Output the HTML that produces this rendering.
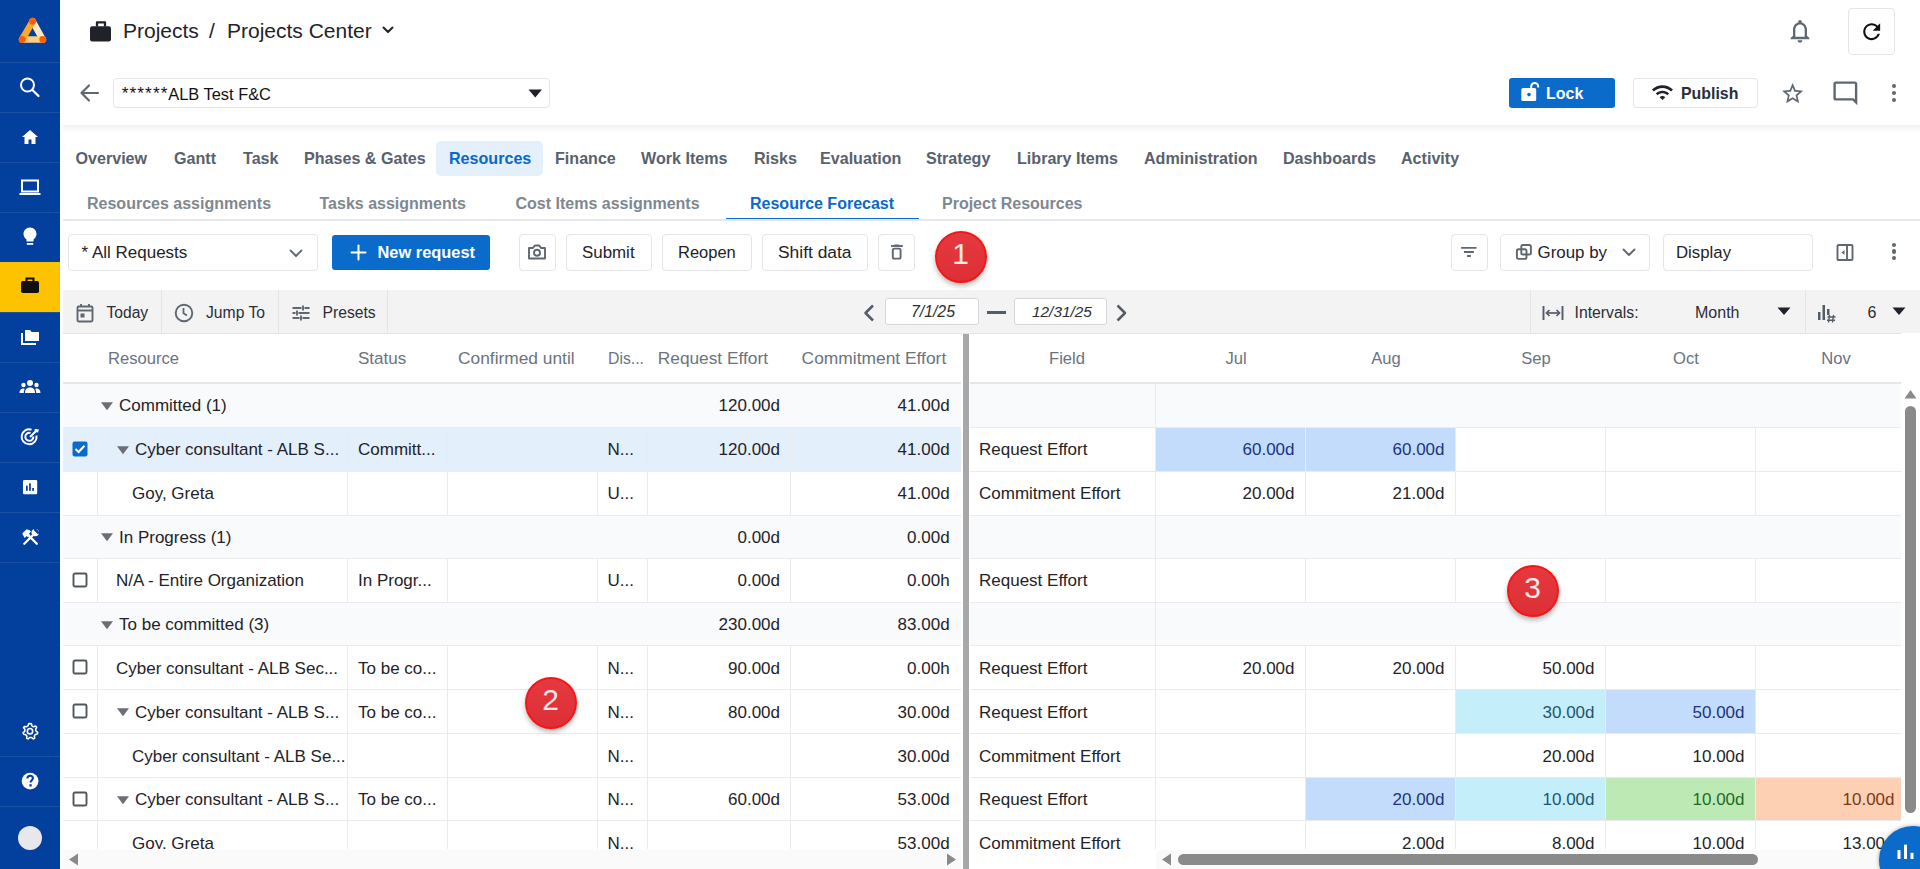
<!DOCTYPE html>
<html><head><meta charset="utf-8"><title>Resource Forecast</title>
<style>
html,body{margin:0;padding:0;}
body{width:1920px;height:869px;overflow:hidden;position:relative;background:#fff;font-family:"Liberation Sans",sans-serif;}
.a{position:absolute;box-sizing:border-box;}
.t{position:absolute;white-space:nowrap;}
svg.a{overflow:visible;}
</style></head><body>

<div class="a" style="left:0px;top:0px;width:60px;height:869px;background:#033f9c;"></div>
<div class="a" style="left:0px;top:62px;width:60px;height:1px;background:rgba(255,255,255,0.10);"></div>
<div class="a" style="left:0px;top:112px;width:60px;height:1px;background:rgba(255,255,255,0.10);"></div>
<div class="a" style="left:0px;top:162px;width:60px;height:1px;background:rgba(255,255,255,0.10);"></div>
<div class="a" style="left:0px;top:212px;width:60px;height:1px;background:rgba(255,255,255,0.10);"></div>
<div class="a" style="left:0px;top:262px;width:60px;height:1px;background:rgba(255,255,255,0.10);"></div>
<div class="a" style="left:0px;top:312px;width:60px;height:1px;background:rgba(255,255,255,0.10);"></div>
<div class="a" style="left:0px;top:362px;width:60px;height:1px;background:rgba(255,255,255,0.10);"></div>
<div class="a" style="left:0px;top:412px;width:60px;height:1px;background:rgba(255,255,255,0.10);"></div>
<div class="a" style="left:0px;top:462px;width:60px;height:1px;background:rgba(255,255,255,0.10);"></div>
<div class="a" style="left:0px;top:512px;width:60px;height:1px;background:rgba(255,255,255,0.10);"></div>
<div class="a" style="left:0px;top:562px;width:60px;height:1px;background:rgba(255,255,255,0.10);"></div>
<div class="a" style="left:0px;top:756px;width:60px;height:1px;background:rgba(255,255,255,0.10);"></div>
<div class="a" style="left:0px;top:806px;width:60px;height:1px;background:rgba(255,255,255,0.10);"></div>
<div class="a" style="left:0px;top:262px;width:60px;height:50px;background:#fdc300;"></div>
<svg class="a" style="left:17px;top:17px;" width="30" height="28" viewBox="0 0 30 28"><path d="M25.8 22.5 L15.6 4.3" stroke="#ffe8bd" stroke-width="6.6" stroke-linecap="round"/>
<path d="M5.2 22.5 L25.8 22.5" stroke="#fdd07f" stroke-width="6.6" stroke-linecap="round"/>
<path d="M15.6 4.3 L5.2 22.5" stroke="#ffa630" stroke-width="6.6" stroke-linecap="round"/>
<circle cx="15.6" cy="4.3" r="3.4" fill="#ff5d00"/><circle cx="5.2" cy="22.5" r="3.4" fill="#ff5d00"/><circle cx="25.8" cy="22.5" r="3.4" fill="#ff5d00"/></svg>
<svg class="a" style="left:18px;top:76px;" width="24" height="24" viewBox="0 0 24 24"><circle cx="9.5" cy="9" r="6.5" fill="none" stroke="#fff" stroke-width="2"/><path d="M14.5 14 L20.5 20" stroke="#fff" stroke-width="2.2" stroke-linecap="round"/></svg>
<svg class="a" style="left:20px;top:128px;" width="20" height="18" viewBox="0 0 20 18"><path d="M10 2 L2 9 H4.5 V16 H8.5 V11.5 H11.5 V16 H15.5 V9 H18 Z" fill="#fff"/></svg>
<svg class="a" style="left:19px;top:178px;" width="22" height="18" viewBox="0 0 22 18"><rect x="3" y="2.5" width="16" height="11" fill="none" stroke="#fff" stroke-width="2"/><rect x="0.5" y="15" width="21" height="2" fill="#fff"/></svg>
<svg class="a" style="left:22px;top:226px;" width="16" height="22" viewBox="0 0 16 22"><path d="M8 1.5 C4 1.5 1.5 4.5 1.5 8 C1.5 10.5 3 12.2 4.5 13.5 V15.5 H11.5 V13.5 C13 12.2 14.5 10.5 14.5 8 C14.5 4.5 12 1.5 8 1.5 Z" fill="#fff"/><rect x="4.8" y="17" width="6.4" height="1.8" fill="#fff"/></svg>
<svg class="a" style="left:20px;top:276px;" width="20" height="18" viewBox="0 0 20 18"><rect x="1" y="5" width="18" height="12" rx="1.8" fill="#111"/><path d="M6.5 5 V2.5 H13.5 V5" fill="none" stroke="#111" stroke-width="2"/></svg>
<svg class="a" style="left:20px;top:328px;" width="20" height="18" viewBox="0 0 20 18"><path d="M5 2 H10 L11.5 4 H19 V13 H5 Z" fill="#fff"/><path d="M2 5 V16 H16" fill="none" stroke="#fff" stroke-width="2"/></svg>
<svg class="a" style="left:19px;top:379px;" width="22" height="16" viewBox="0 0 22 16"><circle cx="11" cy="4" r="3" fill="#fff"/><circle cx="4.5" cy="6" r="2.2" fill="#fff"/><circle cx="17.5" cy="6" r="2.2" fill="#fff"/><path d="M6 14 C6 10 8 8.5 11 8.5 C14 8.5 16 10 16 14 Z" fill="#fff"/><path d="M0.5 14 C0.5 11 2 9.5 4.5 9.5 C5.5 9.5 5.8 10 5.5 10.5 C5 11.5 4.8 12.5 4.8 14 Z" fill="#fff"/><path d="M21.5 14 C21.5 11 20 9.5 17.5 9.5 C16.5 9.5 16.2 10 16.5 10.5 C17 11.5 17.2 12.5 17.2 14 Z" fill="#fff"/></svg>
<svg class="a" style="left:20px;top:427px;" width="20" height="20" viewBox="0 0 20 20"><path d="M16.5 8.5 A7.5 7.5 0 1 1 11.5 2.7" fill="none" stroke="#fff" stroke-width="2"/><path d="M13.3 9.5 A4 4 0 1 1 10.5 6" fill="none" stroke="#fff" stroke-width="2"/><path d="M10 10 L17 3" stroke="#fff" stroke-width="2"/><path d="M14.5 2 L15 5 L18 5.5 L19 2.5 Z" fill="#fff"/></svg>
<svg class="a" style="left:23px;top:480px;" width="14" height="14" viewBox="0 0 14 14"><rect x="0" y="0" width="14.2" height="14.2" rx="1.3" fill="#fff"/><rect x="3" y="5.7" width="1.7" height="5.2" fill="#033f9c"/><rect x="6.1" y="3.2" width="1.7" height="7.7" fill="#033f9c"/><rect x="9.2" y="8" width="1.7" height="2.9" fill="#033f9c"/></svg>
<svg class="a" style="left:20px;top:527px;" width="22" height="22" viewBox="0 0 22 22"><path d="M4.3 16.7 L14 7" stroke="#fff" stroke-width="2.3" stroke-linecap="round"/><path d="M16.8 16.7 L7.5 7.4" stroke="#fff" stroke-width="2.3" stroke-linecap="round"/><path d="M2.2 6.6 L6.6 2.2 L9.6 3.2 L11 4.6 L8.9 6.7 L9.9 7.7 L7.7 9.9 L6.7 8.9 L4.6 11 Z" fill="#fff"/><circle cx="15.2" cy="5.6" r="3.7" fill="#fff"/><path d="M15.4 1 L19.8 5.4 L17.9 7.3 L13.5 2.9 Z" fill="#033f9c"/></svg>
<svg class="a" style="left:20px;top:721px;" width="20" height="20" viewBox="0 0 20 20"><g transform="translate(10 10.2) scale(0.9) translate(-10 -10)"><circle cx="10" cy="10" r="3" fill="none" stroke="#fff" stroke-width="1.8"/><path d="M10 1.5 L11.6 1.7 L12.1 4 L14 5.1 L16.2 4.3 L17.4 5.7 L16.3 7.8 L16.7 9.9 L18.6 11.2 L18.2 13 L15.9 13.6 L14.8 15.5 L15.2 17.8 L13.6 18.6 L11.8 17 L9.6 17 L7.8 18.6 L6.3 17.8 L6.6 15.5 L5.1 13.8 L2.8 13.3 L2.3 11.5 L4.2 10.1 L4.3 7.9 L2.8 6.2 L3.8 4.7 L6.2 5 L8 3.8 L8.4 1.7 Z" fill="none" stroke="#fff" stroke-width="1.7" stroke-linejoin="round"/></g></svg>
<svg class="a" style="left:20px;top:771px;" width="20" height="20" viewBox="0 0 20 20"><circle cx="10.1" cy="10.1" r="8.4" fill="#fff"/><path d="M7.3 7.6 C7.3 5.8 8.5 4.8 10.1 4.8 C11.8 4.8 12.9 5.9 12.9 7.3 C12.9 9.2 10.6 9.4 10.6 11.6" fill="none" stroke="#033f9c" stroke-width="2.1"/><rect x="9.4" y="13.2" width="2.3" height="2.3" fill="#033f9c"/></svg>
<div class="a" style="left:18px;top:826px;width:24px;height:24px;background:#e6e8ec;border-radius:50%;"></div>
<svg class="a" style="left:89px;top:20px;" width="23" height="23" viewBox="0 0 23 23"><rect x="1" y="6.2" width="21" height="15.3" rx="2.2" fill="#1f2329"/><path d="M8 6.5 V2.4 H16 V6.5" fill="none" stroke="#1f2329" stroke-width="2.3" stroke-linejoin="round"/></svg>
<div class="t" style="left:123px;top:20.22px;font-size:21px;line-height:21px;color:#1f2329;">Projects</div>
<div class="t" style="left:209px;top:20.22px;font-size:21px;line-height:21px;color:#1f2329;">/</div>
<div class="t" style="left:227px;top:20.22px;font-size:21px;line-height:21px;color:#1f2329;">Projects Center</div>
<svg class="a" style="left:382px;top:26px;" width="12" height="8" viewBox="0 0 12 8"><path d="M1.5 1.5 L6 6 L10.5 1.5" fill="none" stroke="#1f2329" stroke-width="2" stroke-linecap="round" stroke-linejoin="round"/></svg>
<svg class="a" style="left:79px;top:83px;" width="22" height="20" viewBox="0 0 22 20"><path d="M19 10 H3 M10 2.5 L2.5 10 L10 17.5" fill="none" stroke="#5f6771" stroke-width="2.2" stroke-linecap="round" stroke-linejoin="round"/></svg>
<div class="a" style="left:113px;top:78px;width:437px;height:30px;border:1px solid #e3e5e8;border-radius:4px;background:#fff;"></div>
<div class="t" style="left:121.8px;top:84.86px;font-size:17.3px;line-height:17.3px;color:#111;letter-spacing:1.05px;">******</div>
<div class="t" style="left:168.3px;top:85.62px;font-size:16.4px;line-height:16.4px;color:#111;">ALB Test F&amp;C</div>
<svg class="a" style="left:528px;top:89px;" width="15" height="10" viewBox="0 0 15 10"><path d="M0.5 0.5 H14 L7.25 8.5 Z" fill="#1f2329"/></svg>
<div class="a" style="left:1509px;top:78px;width:106px;height:30px;background:#0b6bcb;border-radius:3px;"></div>
<svg class="a" style="left:1520px;top:81px;" width="22" height="22" viewBox="0 0 22 22"><rect x="1.3" y="7.1" width="14.9" height="12.9" rx="1.6" fill="#fff"/><path d="M11.2 7.6 V5.4 A3.5 3.5 0 0 1 18.2 5.4 V6.6" fill="none" stroke="#fff" stroke-width="2"/><circle cx="9" cy="13.6" r="1.8" fill="#0b6bcb"/></svg>
<div class="t" style="left:1546px;top:85.96px;font-size:16px;line-height:16px;color:#fff;font-weight:bold;">Lock</div>
<div class="a" style="left:1633px;top:78px;width:125px;height:30px;border:1px solid #e3e5e8;border-radius:3px;background:#fff;"></div>
<svg class="a" style="left:1651px;top:80.6px" width="22.9" height="22.9" viewBox="0 0 24 24"><path d="M1 9l2 2c4.97-4.97 13.03-4.97 18 0l2-2C16.930 2.930 7.080 2.930 1 9zm8 8l3 3 3-3c-1.65-1.66-4.34-1.66-6 0zm-4-4l2 2c2.76-2.76 7.24-2.76 10 0l2-2C15.14 9.14 8.87 9.14 5 13z" fill="#1f2329"/></svg>
<div class="t" style="left:1681px;top:86.04px;font-size:15.9px;line-height:15.9px;color:#2a2f36;font-weight:bold;">Publish</div>
<svg class="a" style="left:1779.9px;top:80.6px" width="25.3" height="25.3" viewBox="0 0 24 24"><path d="M22 9.24l-7.19-.62L12 2 9.19 8.63 2 9.24l5.46 4.73L5.82 21 12 17.27 18.18 21l-1.63-7.03L22 9.24zM12 15.4l-3.76 2.27 1-4.28-3.32-2.88 4.38-.38L12 6.1l1.71 4.04 4.38.38-3.32 2.88 1 4.28L12 15.4z" fill="#5f6771"/></svg>
<svg class="a" style="left:1831px;top:78.9px" width="28.7" height="28.7" viewBox="0 0 24 24"><path d="M22 4c0-1.1-.9-2-2-2H4c-1.1 0-2 .9-2 2v12c0 1.1.9 2 2 2h14l4 4V4zm-2 13.17L18.830 16H4V4h16v13.17z" fill="#5f6771"/></svg>
<div class="a" style="left:1891.5px;top:83.7px;width:4.599999999999909px;height:4.599999999999994px;background:#5f6771;border-radius:50%;"></div>
<div class="a" style="left:1891.5px;top:90.7px;width:4.599999999999909px;height:4.599999999999994px;background:#5f6771;border-radius:50%;"></div>
<div class="a" style="left:1891.5px;top:97.7px;width:4.599999999999909px;height:4.599999999999994px;background:#5f6771;border-radius:50%;"></div>
<svg class="a" style="left:1786.1px;top:17.3px" width="28" height="28" viewBox="0 0 24 24"><path d="M12 22c1.1 0 2-.9 2-2h-4c0 1.1.89 2 2 2zm6-6v-5c0-3.07-1.64-5.64-4.5-6.32V4c0-.83-.67-1.5-1.5-1.5s-1.5.67-1.5 1.5v.68C7.630 5.36 6 7.920 6 11v5l-2 2v1h16v-1l-2-2zm-2 1H8v-6c0-2.48 1.51-4.5 4-4.5s4 2.020 4 4.5v6z" fill="#5f6771"/></svg>
<div class="a" style="left:1848px;top:8px;width:47px;height:47px;border:1px solid #e3e5e8;border-radius:4px;background:#fff;"></div>
<svg class="a" style="left:1858.6px;top:18.8px" width="25.4" height="25.4" viewBox="0 0 24 24"><path d="M17.65 6.35C16.2 4.9 14.21 4 12 4c-4.42 0-7.99 3.58-7.99 8s3.57 8 7.99 8c3.73 0 6.84-2.55 7.73-6h-2.08c-.82 2.33-3.040 4-5.65 4-3.31 0-6-2.69-6-6s2.69-6 6-6c1.66 0 3.14.69 4.22 1.78L13 11h7V4l-2.35 2.35z" fill="#111"/></svg>
<div class="a" style="left:63px;top:125px;width:1857px;height:8px;background:linear-gradient(#f1f2f4,#ffffff);"></div>
<div class="a" style="left:436px;top:141px;width:107px;height:35px;background:#e4f0fc;border-radius:5px;"></div>
<div class="t" style="left:75.5px;top:149.87px;font-size:16.1px;line-height:16.1px;color:#58616d;font-weight:bold;">Overview</div>
<div class="t" style="left:174px;top:149.87px;font-size:16.1px;line-height:16.1px;color:#58616d;font-weight:bold;">Gantt</div>
<div class="t" style="left:243px;top:149.87px;font-size:16.1px;line-height:16.1px;color:#58616d;font-weight:bold;">Task</div>
<div class="t" style="left:304px;top:149.87px;font-size:16.1px;line-height:16.1px;color:#58616d;font-weight:bold;">Phases &amp; Gates</div>
<div class="t" style="left:449px;top:149.87px;font-size:16.1px;line-height:16.1px;color:#0a68c8;font-weight:bold;">Resources</div>
<div class="t" style="left:555px;top:149.87px;font-size:16.1px;line-height:16.1px;color:#58616d;font-weight:bold;">Finance</div>
<div class="t" style="left:641px;top:149.87px;font-size:16.1px;line-height:16.1px;color:#58616d;font-weight:bold;">Work Items</div>
<div class="t" style="left:754px;top:149.87px;font-size:16.1px;line-height:16.1px;color:#58616d;font-weight:bold;">Risks</div>
<div class="t" style="left:820px;top:149.87px;font-size:16.1px;line-height:16.1px;color:#58616d;font-weight:bold;">Evaluation</div>
<div class="t" style="left:926px;top:149.87px;font-size:16.1px;line-height:16.1px;color:#58616d;font-weight:bold;">Strategy</div>
<div class="t" style="left:1017px;top:149.87px;font-size:16.1px;line-height:16.1px;color:#58616d;font-weight:bold;">Library Items</div>
<div class="t" style="left:1144px;top:149.87px;font-size:16.1px;line-height:16.1px;color:#58616d;font-weight:bold;">Administration</div>
<div class="t" style="left:1283px;top:149.87px;font-size:16.1px;line-height:16.1px;color:#58616d;font-weight:bold;">Dashboards</div>
<div class="t" style="left:1401px;top:149.87px;font-size:16.1px;line-height:16.1px;color:#58616d;font-weight:bold;">Activity</div>
<div class="t" style="left:87px;top:195.96px;font-size:16px;line-height:16px;color:#7f8791;font-weight:bold;">Resources assignments</div>
<div class="t" style="left:319.5px;top:195.96px;font-size:16px;line-height:16px;color:#7f8791;font-weight:bold;">Tasks assignments</div>
<div class="t" style="left:515.5px;top:195.96px;font-size:16px;line-height:16px;color:#7f8791;font-weight:bold;">Cost Items assignments</div>
<div class="t" style="left:750px;top:195.96px;font-size:16px;line-height:16px;color:#0a68c8;font-weight:bold;">Resource Forecast</div>
<div class="t" style="left:942px;top:195.96px;font-size:16px;line-height:16px;color:#7f8791;font-weight:bold;">Project Resources</div>
<div class="a" style="left:726px;top:217.5px;width:192.5px;height:3.0px;background:#0b6bcb;"></div>
<div class="a" style="left:63px;top:219px;width:1857px;height:2px;background:#e6e8ec;"></div>
<div class="a" style="left:68px;top:234px;width:250px;height:37px;border:1px solid #e3e5e8;border-radius:4px;background:#fff;"></div>
<div class="t" style="left:81.5px;top:243.91px;font-size:17px;line-height:17px;color:#1f2329;">* All Requests</div>
<svg class="a" style="left:289px;top:249px;" width="14" height="9" viewBox="0 0 14 9"><path d="M1.5 1.5 L7 7 L12.5 1.5" fill="none" stroke="#5f6771" stroke-width="1.8" stroke-linecap="round" stroke-linejoin="round"/></svg>
<div class="a" style="left:332px;top:235px;width:158px;height:35px;background:#0b6bcb;border-radius:3px;"></div>
<svg class="a" style="left:350px;top:244px;" width="17" height="17" viewBox="0 0 17 17"><path d="M8.5 1.5 V15.5 M1.5 8.5 H15.5" stroke="#fff" stroke-width="2" stroke-linecap="round"/></svg>
<div class="t" style="left:377.5px;top:244.42px;font-size:16.4px;line-height:16.4px;color:#fff;font-weight:bold;font-weight:600;">New request</div>
<div class="a" style="left:519px;top:234px;width:37px;height:37px;border:1px solid #e3e5e8;border-radius:4px;background:#fff;"></div>
<svg class="a" style="left:527px;top:242px;" width="20" height="20" viewBox="0 0 20 20"><path d="M2 6 H6 L7.8 3.5 H12.2 L14 6 H18 V16.5 H2 Z" fill="none" stroke="#5f6771" stroke-width="1.9" stroke-linejoin="round"/><circle cx="10" cy="10.8" r="3" fill="none" stroke="#5f6771" stroke-width="1.9"/></svg>
<div class="a" style="left:566px;top:234px;width:86px;height:37px;border:1px solid #e3e5e8;border-radius:4px;background:#fff;"></div>
<div class="t" style="left:582px;top:244.79px;font-size:16.9px;line-height:16.9px;color:#1f2329;">Submit</div>
<div class="a" style="left:662px;top:234px;width:90px;height:37px;border:1px solid #e3e5e8;border-radius:4px;background:#fff;"></div>
<div class="t" style="left:678px;top:244.33px;font-size:16.5px;line-height:16.5px;color:#1f2329;">Reopen</div>
<div class="a" style="left:762px;top:234px;width:106px;height:37px;border:1px solid #e3e5e8;border-radius:4px;background:#fff;"></div>
<div class="t" style="left:778px;top:243.57px;font-size:17.4px;line-height:17.4px;color:#1f2329;">Shift data</div>
<div class="a" style="left:878px;top:234px;width:37px;height:37px;border:1px solid #e3e5e8;border-radius:4px;background:#fff;"></div>
<svg class="a" style="left:887px;top:242px;" width="20" height="20" viewBox="0 0 20 20"><rect x="5.8" y="6.6" width="7.8" height="10" rx="1.6" fill="none" stroke="#5f6771" stroke-width="1.9"/><path d="M4 4 H15.9" stroke="#5f6771" stroke-width="1.9"/><path d="M7.8 3.2 H11.8" stroke="#5f6771" stroke-width="1.6" stroke-linecap="round"/></svg>
<div class="a" style="left:1451px;top:234px;width:37px;height:37px;border:1px solid #e3e5e8;border-radius:4px;background:#fff;"></div>
<svg class="a" style="left:1459px;top:242px;" width="20" height="20" viewBox="0 0 20 20"><path d="M2.1 5.9 H17.5 M5 10 H14.9 M8.1 14 H11.8" stroke="#5f6771" stroke-width="1.9" stroke-linecap="butt"/></svg>
<div class="a" style="left:1500px;top:234px;width:150px;height:37px;border:1px solid #e3e5e8;border-radius:4px;background:#fff;"></div>
<svg class="a" style="left:1515px;top:243px;" width="18" height="18" viewBox="0 0 18 18"><rect x="6.3" y="2" width="9.6" height="9.5" rx="1.6" fill="none" stroke="#5f6771" stroke-width="1.9"/><rect x="1.9" y="6.3" width="9.6" height="9.6" rx="1.6" fill="none" stroke="#5f6771" stroke-width="1.9"/></svg>
<div class="t" style="left:1537.5px;top:244.79px;font-size:16.9px;line-height:16.9px;color:#1f2329;">Group by</div>
<svg class="a" style="left:1622px;top:248px;" width="14" height="9" viewBox="0 0 14 9"><path d="M1.5 1.5 L7 7 L12.5 1.5" fill="none" stroke="#5f6771" stroke-width="1.8" stroke-linecap="round" stroke-linejoin="round"/></svg>
<div class="a" style="left:1663px;top:234px;width:150px;height:37px;border:1px solid #e3e5e8;border-radius:4px;background:#fff;"></div>
<div class="t" style="left:1676px;top:244.88px;font-size:16.8px;line-height:16.8px;color:#1f2329;">Display</div>
<svg class="a" style="left:1836px;top:243px;" width="18" height="19" viewBox="0 0 18 19"><rect x="1.5" y="2" width="15" height="15" rx="1" fill="none" stroke="#5f6771" stroke-width="1.9"/><path d="M11 2 V17" stroke="#5f6771" stroke-width="1.9"/><path d="M8.5 7 L5.5 9.5 L8.5 12 Z" fill="#5f6771"/></svg>
<div class="a" style="left:1891.5px;top:242.8px;width:4.400000000000091px;height:4.399999999999977px;background:#5f6771;border-radius:50%;"></div>
<div class="a" style="left:1891.5px;top:249.3px;width:4.400000000000091px;height:4.399999999999977px;background:#5f6771;border-radius:50%;"></div>
<div class="a" style="left:1891.5px;top:255.8px;width:4.400000000000091px;height:4.399999999999977px;background:#5f6771;border-radius:50%;"></div>
<div class="a" style="left:63px;top:290px;width:1857px;height:43px;background:#f3f3f4;"></div>
<div class="a" style="left:63px;top:333px;width:1838px;height:1px;background:#e3e4e6;"></div>
<div class="a" style="left:161px;top:290px;width:1px;height:43px;background:#e3e4e6;"></div>
<div class="a" style="left:278px;top:290px;width:1px;height:43px;background:#e3e4e6;"></div>
<div class="a" style="left:387px;top:290px;width:1px;height:43px;background:#e3e4e6;"></div>
<div class="a" style="left:1530px;top:290px;width:1px;height:43px;background:#e3e4e6;"></div>
<div class="a" style="left:1805px;top:290px;width:1px;height:43px;background:#e3e4e6;"></div>
<svg class="a" style="left:76px;top:303px;" width="18" height="20" viewBox="0 0 18 20"><rect x="1.5" y="3.5" width="15" height="15" rx="1.2" fill="none" stroke="#5f6771" stroke-width="1.9"/><path d="M1.5 7.5 H16.5" stroke="#5f6771" stroke-width="1.9"/><path d="M5 1 V4 M13 1 V4" stroke="#5f6771" stroke-width="1.9"/><rect x="4.5" y="10.5" width="4" height="4" fill="#5f6771"/></svg>
<div class="t" style="left:106.5px;top:304.99px;font-size:15.6px;line-height:15.6px;color:#2a2f36;">Today</div>
<svg class="a" style="left:174px;top:303px;" width="20" height="20" viewBox="0 0 20 20"><circle cx="10" cy="10" r="8.3" fill="none" stroke="#5f6771" stroke-width="1.9"/><path d="M9.5 5 V10.3 L13 12.5" fill="none" stroke="#5f6771" stroke-width="1.8"/></svg>
<div class="t" style="left:206px;top:304.91px;font-size:15.7px;line-height:15.7px;color:#2a2f36;">Jump To</div>
<svg class="a" style="left:291px;top:303px;" width="20" height="20" viewBox="0 0 20 20"><path d="M1.5 5 H10.5 M13.5 5 H18.5 M1.5 10 H4.5 M7.5 10 H18.5 M1.5 15 H8.5 M11.5 15 H18.5 M12 2.5 V7.5 M6 7.5 V12.5 M10 12.5 V17.5" stroke="#5f6771" stroke-width="1.9"/></svg>
<div class="t" style="left:322.5px;top:304.91px;font-size:15.7px;line-height:15.7px;color:#2a2f36;">Presets</div>
<svg class="a" style="left:861px;top:303px;" width="15" height="20" viewBox="0 0 15 20"><path d="M12 2.5 L4.5 10 L12 17.5" fill="none" stroke="#545c68" stroke-width="2.5" stroke-linejoin="round"/></svg>
<div class="a" style="left:885px;top:298px;width:94px;height:27px;border:1px solid #d3d6da;border-radius:3px;background:#fff;"></div>
<div class="t" style="left:911px;top:303.63px;font-size:15.8px;line-height:15.8px;color:#2a2f36;font-style:italic;">7/1/25</div>
<div class="a" style="left:987px;top:311px;width:19px;height:3px;background:#545c68;"></div>
<div class="a" style="left:1014px;top:298px;width:93px;height:27px;border:1px solid #d3d6da;border-radius:3px;background:#fff;"></div>
<div class="t" style="left:1032px;top:303.96px;font-size:15.4px;line-height:15.4px;color:#2a2f36;font-style:italic;">12/31/25</div>
<svg class="a" style="left:1114px;top:303px;" width="15" height="20" viewBox="0 0 15 20"><path d="M3.5 2.5 L11 10 L3.5 17.5" fill="none" stroke="#545c68" stroke-width="2.5" stroke-linejoin="round"/></svg>
<svg class="a" style="left:1542px;top:303px;" width="22" height="20" viewBox="0 0 22 20"><path d="M1.5 3 V17 M20.5 3 V17" stroke="#545c68" stroke-width="1.9"/><path d="M5 10 H17" stroke="#545c68" stroke-width="1.7"/><path d="M7.5 7 L4.5 10 L7.5 13 M14.5 7 L17.5 10 L14.5 13" fill="none" stroke="#545c68" stroke-width="1.7"/></svg>
<div class="t" style="left:1574.5px;top:304.83px;font-size:15.8px;line-height:15.8px;color:#2a2f36;">Intervals:</div>
<div class="t" style="left:1695px;top:304.66px;font-size:16px;line-height:16px;color:#2a2f36;">Month</div>
<svg class="a" style="left:1777px;top:307px;" width="14" height="9" viewBox="0 0 14 9"><path d="M0.5 0.5 H13.5 L7 8 Z" fill="#1f2329"/></svg>
<svg class="a" style="left:1817px;top:303px;" width="22" height="20" viewBox="0 0 22 20"><rect x="1" y="9" width="2.5" height="8" fill="#545c68"/><rect x="5.5" y="2" width="2.5" height="15" fill="#545c68"/><rect x="10" y="6" width="2.5" height="6" fill="#545c68"/><path d="M12.5 12 L11.5 19.5 M16.5 12 L15.5 19.5 M10.5 14 H18.5 M10 17.3 H18" stroke="#545c68" stroke-width="1.4"/></svg>
<div class="t" style="left:1867.5px;top:304.66px;font-size:16px;line-height:16px;color:#2a2f36;">6</div>
<svg class="a" style="left:1892px;top:307px;" width="14" height="9" viewBox="0 0 14 9"><path d="M0.5 0.5 H13.5 L7 8 Z" fill="#1f2329"/></svg>
<div class="a" style="left:63px;top:334px;width:898px;height:49px;background:#fff;"></div>
<div class="a" style="left:970px;top:334px;width:931px;height:49px;background:#fff;"></div>
<div class="a" style="left:63px;top:381.5px;width:898px;height:2.0px;background:#e4e6e9;"></div>
<div class="a" style="left:970px;top:381.5px;width:931px;height:2.0px;background:#e4e6e9;"></div>
<div class="t" style="left:108px;top:350.75px;font-size:16.6px;line-height:16.6px;color:#6b7380;">Resource</div>
<div class="t" style="left:358px;top:350.37px;font-size:17.05px;line-height:17.05px;color:#6b7380;">Status</div>
<div class="t" style="left:458px;top:350.11px;font-size:17.35px;line-height:17.35px;color:#6b7380;">Confirmed until</div>
<div class="t" style="left:608px;top:351.43px;font-size:15.8px;line-height:15.8px;color:#6b7380;">Dis...</div>
<div class="t" style="left:657.8px;top:350.16px;font-size:17.3px;line-height:17.3px;color:#6b7380;">Request Effort</div>
<div class="t" style="left:801.6px;top:350.07px;font-size:17.4px;line-height:17.4px;color:#6b7380;">Commitment Effort</div>
<div class="t" style="left:1007.0px;width:120px;text-align:center;top:350.75px;font-size:16.6px;line-height:16.6px;color:#6b7380;">Field</div>
<div class="t" style="left:1176.0px;width:120px;text-align:center;top:350.75px;font-size:16.6px;line-height:16.6px;color:#6b7380;">Jul</div>
<div class="t" style="left:1326.0px;width:120px;text-align:center;top:350.75px;font-size:16.6px;line-height:16.6px;color:#6b7380;">Aug</div>
<div class="t" style="left:1476.0px;width:120px;text-align:center;top:350.75px;font-size:16.6px;line-height:16.6px;color:#6b7380;">Sep</div>
<div class="t" style="left:1626.0px;width:120px;text-align:center;top:350.75px;font-size:16.6px;line-height:16.6px;color:#6b7380;">Oct</div>
<div class="t" style="left:1776.0px;width:120px;text-align:center;top:350.75px;font-size:16.6px;line-height:16.6px;color:#6b7380;">Nov</div>
<div class="a" style="left:962.5px;top:334px;width:6.5px;height:535px;background:#a8a8a8;"></div>
<div class="a" style="left:0;top:383px;width:1920px;height:466px;overflow:hidden;">
<div class="a" style="left:63px;top:1.00px;width:898px;height:44.00px;background:#f9fafc;"></div>
<div class="a" style="left:970px;top:1.00px;width:931px;height:44.00px;background:#f9fafc;"></div>
<div class="a" style="left:63px;top:44.00px;width:898px;height:1.00px;background:#e9ebee;"></div>
<div class="a" style="left:970px;top:44.00px;width:931px;height:1.00px;background:#e9ebee;"></div>
<div class="a" style="left:1155px;top:1.00px;width:1px;height:44.00px;background:#e9ebee;"></div>
<svg class="a" style="left:101px;top:18.50px" width="12" height="9" viewBox="0 0 12 9"><path d="M0 0.3 H12 L6 8.3 Z" fill="#6b6f75"/></svg>
<div class="t" style="left:119px;top:14.01px;font-size:17px;line-height:17px;color:#1f2329;">Committed (1)</div>
<div class="t" style="right:1140px;top:14.01px;font-size:17px;line-height:17px;color:#1f2329;">120.00d</div>
<div class="t" style="right:970.4px;top:14.01px;font-size:17px;line-height:17px;color:#1f2329;">41.00d</div>
<div class="a" style="left:63px;top:45.00px;width:898px;height:44.00px;background:#e3effa;"></div>
<div class="a" style="left:970px;top:45.00px;width:931px;height:44.00px;background:#fff;"></div>
<div class="a" style="left:63px;top:88.00px;width:898px;height:1.00px;background:#e9ebee;"></div>
<div class="a" style="left:970px;top:88.00px;width:931px;height:1.00px;background:#e9ebee;"></div>
<div class="a" style="left:97px;top:45.00px;width:1px;height:44.00px;background:#e9ebee;"></div>
<div class="a" style="left:347px;top:45.00px;width:1px;height:44.00px;background:#e9ebee;"></div>
<div class="a" style="left:447px;top:45.00px;width:1px;height:44.00px;background:#e9ebee;"></div>
<div class="a" style="left:597px;top:45.00px;width:1px;height:44.00px;background:#e9ebee;"></div>
<div class="a" style="left:647px;top:45.00px;width:1px;height:44.00px;background:#e9ebee;"></div>
<div class="a" style="left:790px;top:45.00px;width:1px;height:44.00px;background:#e9ebee;"></div>
<div class="a" style="left:1155px;top:45.00px;width:1px;height:44.00px;background:#e9ebee;"></div>
<div class="a" style="left:1305px;top:45.00px;width:1px;height:44.00px;background:#e9ebee;"></div>
<div class="a" style="left:1455px;top:45.00px;width:1px;height:44.00px;background:#e9ebee;"></div>
<div class="a" style="left:1605px;top:45.00px;width:1px;height:44.00px;background:#e9ebee;"></div>
<div class="a" style="left:1755px;top:45.00px;width:1px;height:44.00px;background:#e9ebee;"></div>
<div class="a" style="left:1156px;top:45.00px;width:149px;height:43.00px;background:#c3dcfb;"></div>
<div class="a" style="left:1306px;top:45.00px;width:149px;height:43.00px;background:#c3dcfb;"></div>
<svg class="a" style="left:71.7px;top:58.00px" width="16" height="16" viewBox="0 0 16 16"><rect x="0.5" y="0.5" width="15" height="15" rx="2" fill="#0b6bcb"/><path d="M3.5 8 L6.6 11 L12.5 4.8" fill="none" stroke="#fff" stroke-width="2"/></svg>
<svg class="a" style="left:117px;top:62.50px" width="12" height="9" viewBox="0 0 12 9"><path d="M0 0.3 H12 L6 8.3 Z" fill="#6b6f75"/></svg>
<div class="t" style="left:135px;top:57.84px;font-size:17px;line-height:17px;color:#1f2329;">Cyber consultant - ALB S...</div>
<div class="t" style="left:358px;top:57.84px;font-size:17px;line-height:17px;color:#1f2329;">Committ...</div>
<div class="t" style="left:607.5px;top:57.84px;font-size:17px;line-height:17px;color:#1f2329;">N...</div>
<div class="t" style="right:1140px;top:57.84px;font-size:17px;line-height:17px;color:#1f2329;">120.00d</div>
<div class="t" style="right:970.4px;top:57.84px;font-size:17px;line-height:17px;color:#1f2329;">41.00d</div>
<div class="t" style="left:979px;top:57.84px;font-size:17px;line-height:17px;color:#1f2329;">Request Effort</div>
<div class="t" style="right:625.5px;top:57.84px;font-size:17px;line-height:17px;color:#1c3480;">60.00d</div>
<div class="t" style="right:475.5px;top:57.84px;font-size:17px;line-height:17px;color:#1c3480;">60.00d</div>
<div class="a" style="left:63px;top:89.00px;width:898px;height:43.50px;background:#fff;"></div>
<div class="a" style="left:970px;top:89.00px;width:931px;height:43.50px;background:#fff;"></div>
<div class="a" style="left:63px;top:131.50px;width:898px;height:1.00px;background:#e9ebee;"></div>
<div class="a" style="left:970px;top:131.50px;width:931px;height:1.00px;background:#e9ebee;"></div>
<div class="a" style="left:97px;top:89.00px;width:1px;height:43.50px;background:#e9ebee;"></div>
<div class="a" style="left:347px;top:89.00px;width:1px;height:43.50px;background:#e9ebee;"></div>
<div class="a" style="left:447px;top:89.00px;width:1px;height:43.50px;background:#e9ebee;"></div>
<div class="a" style="left:597px;top:89.00px;width:1px;height:43.50px;background:#e9ebee;"></div>
<div class="a" style="left:647px;top:89.00px;width:1px;height:43.50px;background:#e9ebee;"></div>
<div class="a" style="left:790px;top:89.00px;width:1px;height:43.50px;background:#e9ebee;"></div>
<div class="a" style="left:1155px;top:89.00px;width:1px;height:43.50px;background:#e9ebee;"></div>
<div class="a" style="left:1305px;top:89.00px;width:1px;height:43.50px;background:#e9ebee;"></div>
<div class="a" style="left:1455px;top:89.00px;width:1px;height:43.50px;background:#e9ebee;"></div>
<div class="a" style="left:1605px;top:89.00px;width:1px;height:43.50px;background:#e9ebee;"></div>
<div class="a" style="left:1755px;top:89.00px;width:1px;height:43.50px;background:#e9ebee;"></div>
<div class="t" style="left:132px;top:101.67px;font-size:17px;line-height:17px;color:#1f2329;">Goy, Greta</div>
<div class="t" style="left:607.5px;top:101.67px;font-size:17px;line-height:17px;color:#1f2329;">U...</div>
<div class="t" style="right:970.4px;top:101.67px;font-size:17px;line-height:17px;color:#1f2329;">41.00d</div>
<div class="t" style="left:979px;top:101.67px;font-size:17px;line-height:17px;color:#1f2329;">Commitment Effort</div>
<div class="t" style="right:625.5px;top:101.67px;font-size:17px;line-height:17px;color:#1f2329;">20.00d</div>
<div class="t" style="right:475.5px;top:101.67px;font-size:17px;line-height:17px;color:#1f2329;">21.00d</div>
<div class="a" style="left:63px;top:132.50px;width:898px;height:43.50px;background:#f9fafc;"></div>
<div class="a" style="left:970px;top:132.50px;width:931px;height:43.50px;background:#f9fafc;"></div>
<div class="a" style="left:63px;top:175.00px;width:898px;height:1.00px;background:#e9ebee;"></div>
<div class="a" style="left:970px;top:175.00px;width:931px;height:1.00px;background:#e9ebee;"></div>
<div class="a" style="left:1155px;top:132.50px;width:1px;height:43.50px;background:#e9ebee;"></div>
<svg class="a" style="left:101px;top:150.00px" width="12" height="9" viewBox="0 0 12 9"><path d="M0 0.3 H12 L6 8.3 Z" fill="#6b6f75"/></svg>
<div class="t" style="left:119px;top:145.50px;font-size:17px;line-height:17px;color:#1f2329;">In Progress (1)</div>
<div class="t" style="right:1140px;top:145.50px;font-size:17px;line-height:17px;color:#1f2329;">0.00d</div>
<div class="t" style="right:970.4px;top:145.50px;font-size:17px;line-height:17px;color:#1f2329;">0.00d</div>
<div class="a" style="left:63px;top:176.00px;width:898px;height:44.00px;background:#fff;"></div>
<div class="a" style="left:970px;top:176.00px;width:931px;height:44.00px;background:#fff;"></div>
<div class="a" style="left:63px;top:219.00px;width:898px;height:1.00px;background:#e9ebee;"></div>
<div class="a" style="left:970px;top:219.00px;width:931px;height:1.00px;background:#e9ebee;"></div>
<div class="a" style="left:97px;top:176.00px;width:1px;height:44.00px;background:#e9ebee;"></div>
<div class="a" style="left:347px;top:176.00px;width:1px;height:44.00px;background:#e9ebee;"></div>
<div class="a" style="left:447px;top:176.00px;width:1px;height:44.00px;background:#e9ebee;"></div>
<div class="a" style="left:597px;top:176.00px;width:1px;height:44.00px;background:#e9ebee;"></div>
<div class="a" style="left:647px;top:176.00px;width:1px;height:44.00px;background:#e9ebee;"></div>
<div class="a" style="left:790px;top:176.00px;width:1px;height:44.00px;background:#e9ebee;"></div>
<div class="a" style="left:1155px;top:176.00px;width:1px;height:44.00px;background:#e9ebee;"></div>
<div class="a" style="left:1305px;top:176.00px;width:1px;height:44.00px;background:#e9ebee;"></div>
<div class="a" style="left:1455px;top:176.00px;width:1px;height:44.00px;background:#e9ebee;"></div>
<div class="a" style="left:1605px;top:176.00px;width:1px;height:44.00px;background:#e9ebee;"></div>
<div class="a" style="left:1755px;top:176.00px;width:1px;height:44.00px;background:#e9ebee;"></div>
<svg class="a" style="left:71.7px;top:189.00px" width="16" height="16" viewBox="0 0 16 16"><rect x="1.5" y="1.5" width="13" height="13" rx="1.5" fill="#fff" stroke="#4f5660" stroke-width="1.9"/></svg>
<div class="t" style="left:116px;top:189.33px;font-size:17px;line-height:17px;color:#1f2329;">N/A - Entire Organization</div>
<div class="t" style="left:358px;top:189.33px;font-size:17px;line-height:17px;color:#1f2329;">In Progr...</div>
<div class="t" style="left:607.5px;top:189.33px;font-size:17px;line-height:17px;color:#1f2329;">U...</div>
<div class="t" style="right:1140px;top:189.33px;font-size:17px;line-height:17px;color:#1f2329;">0.00d</div>
<div class="t" style="right:970.4px;top:189.33px;font-size:17px;line-height:17px;color:#1f2329;">0.00h</div>
<div class="t" style="left:979px;top:189.33px;font-size:17px;line-height:17px;color:#1f2329;">Request Effort</div>
<div class="a" style="left:63px;top:220.00px;width:898px;height:43.00px;background:#f9fafc;"></div>
<div class="a" style="left:970px;top:220.00px;width:931px;height:43.00px;background:#f9fafc;"></div>
<div class="a" style="left:63px;top:262.00px;width:898px;height:1.00px;background:#e9ebee;"></div>
<div class="a" style="left:970px;top:262.00px;width:931px;height:1.00px;background:#e9ebee;"></div>
<div class="a" style="left:1155px;top:220.00px;width:1px;height:43.00px;background:#e9ebee;"></div>
<svg class="a" style="left:101px;top:237.50px" width="12" height="9" viewBox="0 0 12 9"><path d="M0 0.3 H12 L6 8.3 Z" fill="#6b6f75"/></svg>
<div class="t" style="left:119px;top:233.16px;font-size:17px;line-height:17px;color:#1f2329;">To be committed (3)</div>
<div class="t" style="right:1140px;top:233.16px;font-size:17px;line-height:17px;color:#1f2329;">230.00d</div>
<div class="t" style="right:970.4px;top:233.16px;font-size:17px;line-height:17px;color:#1f2329;">83.00d</div>
<div class="a" style="left:63px;top:263.00px;width:898px;height:44.00px;background:#fff;"></div>
<div class="a" style="left:970px;top:263.00px;width:931px;height:44.00px;background:#fff;"></div>
<div class="a" style="left:63px;top:306.00px;width:898px;height:1.00px;background:#e9ebee;"></div>
<div class="a" style="left:970px;top:306.00px;width:931px;height:1.00px;background:#e9ebee;"></div>
<div class="a" style="left:97px;top:263.00px;width:1px;height:44.00px;background:#e9ebee;"></div>
<div class="a" style="left:347px;top:263.00px;width:1px;height:44.00px;background:#e9ebee;"></div>
<div class="a" style="left:447px;top:263.00px;width:1px;height:44.00px;background:#e9ebee;"></div>
<div class="a" style="left:597px;top:263.00px;width:1px;height:44.00px;background:#e9ebee;"></div>
<div class="a" style="left:647px;top:263.00px;width:1px;height:44.00px;background:#e9ebee;"></div>
<div class="a" style="left:790px;top:263.00px;width:1px;height:44.00px;background:#e9ebee;"></div>
<div class="a" style="left:1155px;top:263.00px;width:1px;height:44.00px;background:#e9ebee;"></div>
<div class="a" style="left:1305px;top:263.00px;width:1px;height:44.00px;background:#e9ebee;"></div>
<div class="a" style="left:1455px;top:263.00px;width:1px;height:44.00px;background:#e9ebee;"></div>
<div class="a" style="left:1605px;top:263.00px;width:1px;height:44.00px;background:#e9ebee;"></div>
<div class="a" style="left:1755px;top:263.00px;width:1px;height:44.00px;background:#e9ebee;"></div>
<svg class="a" style="left:71.7px;top:276.00px" width="16" height="16" viewBox="0 0 16 16"><rect x="1.5" y="1.5" width="13" height="13" rx="1.5" fill="#fff" stroke="#4f5660" stroke-width="1.9"/></svg>
<div class="t" style="left:116px;top:276.99px;font-size:17px;line-height:17px;color:#1f2329;">Cyber consultant - ALB Sec...</div>
<div class="t" style="left:358px;top:276.99px;font-size:17px;line-height:17px;color:#1f2329;">To be co...</div>
<div class="t" style="left:607.5px;top:276.99px;font-size:17px;line-height:17px;color:#1f2329;">N...</div>
<div class="t" style="right:1140px;top:276.99px;font-size:17px;line-height:17px;color:#1f2329;">90.00d</div>
<div class="t" style="right:970.4px;top:276.99px;font-size:17px;line-height:17px;color:#1f2329;">0.00h</div>
<div class="t" style="left:979px;top:276.99px;font-size:17px;line-height:17px;color:#1f2329;">Request Effort</div>
<div class="t" style="right:625.5px;top:276.99px;font-size:17px;line-height:17px;color:#1f2329;">20.00d</div>
<div class="t" style="right:475.5px;top:276.99px;font-size:17px;line-height:17px;color:#1f2329;">20.00d</div>
<div class="t" style="right:325.5px;top:276.99px;font-size:17px;line-height:17px;color:#1f2329;">50.00d</div>
<div class="a" style="left:63px;top:307.00px;width:898px;height:44.00px;background:#fff;"></div>
<div class="a" style="left:970px;top:307.00px;width:931px;height:44.00px;background:#fff;"></div>
<div class="a" style="left:63px;top:350.00px;width:898px;height:1.00px;background:#e9ebee;"></div>
<div class="a" style="left:970px;top:350.00px;width:931px;height:1.00px;background:#e9ebee;"></div>
<div class="a" style="left:97px;top:307.00px;width:1px;height:44.00px;background:#e9ebee;"></div>
<div class="a" style="left:347px;top:307.00px;width:1px;height:44.00px;background:#e9ebee;"></div>
<div class="a" style="left:447px;top:307.00px;width:1px;height:44.00px;background:#e9ebee;"></div>
<div class="a" style="left:597px;top:307.00px;width:1px;height:44.00px;background:#e9ebee;"></div>
<div class="a" style="left:647px;top:307.00px;width:1px;height:44.00px;background:#e9ebee;"></div>
<div class="a" style="left:790px;top:307.00px;width:1px;height:44.00px;background:#e9ebee;"></div>
<div class="a" style="left:1155px;top:307.00px;width:1px;height:44.00px;background:#e9ebee;"></div>
<div class="a" style="left:1305px;top:307.00px;width:1px;height:44.00px;background:#e9ebee;"></div>
<div class="a" style="left:1455px;top:307.00px;width:1px;height:44.00px;background:#e9ebee;"></div>
<div class="a" style="left:1605px;top:307.00px;width:1px;height:44.00px;background:#e9ebee;"></div>
<div class="a" style="left:1755px;top:307.00px;width:1px;height:44.00px;background:#e9ebee;"></div>
<div class="a" style="left:1456px;top:307.00px;width:149px;height:43.00px;background:#c5eefb;"></div>
<div class="a" style="left:1606px;top:307.00px;width:149px;height:43.00px;background:#c3dcfb;"></div>
<svg class="a" style="left:71.7px;top:320.00px" width="16" height="16" viewBox="0 0 16 16"><rect x="1.5" y="1.5" width="13" height="13" rx="1.5" fill="#fff" stroke="#4f5660" stroke-width="1.9"/></svg>
<svg class="a" style="left:117px;top:324.50px" width="12" height="9" viewBox="0 0 12 9"><path d="M0 0.3 H12 L6 8.3 Z" fill="#6b6f75"/></svg>
<div class="t" style="left:135px;top:320.82px;font-size:17px;line-height:17px;color:#1f2329;">Cyber consultant - ALB S...</div>
<div class="t" style="left:358px;top:320.82px;font-size:17px;line-height:17px;color:#1f2329;">To be co...</div>
<div class="t" style="left:607.5px;top:320.82px;font-size:17px;line-height:17px;color:#1f2329;">N...</div>
<div class="t" style="right:1140px;top:320.82px;font-size:17px;line-height:17px;color:#1f2329;">80.00d</div>
<div class="t" style="right:970.4px;top:320.82px;font-size:17px;line-height:17px;color:#1f2329;">30.00d</div>
<div class="t" style="left:979px;top:320.82px;font-size:17px;line-height:17px;color:#1f2329;">Request Effort</div>
<div class="t" style="right:325.5px;top:320.82px;font-size:17px;line-height:17px;color:#1d5570;">30.00d</div>
<div class="t" style="right:175.5px;top:320.82px;font-size:17px;line-height:17px;color:#1c3480;">50.00d</div>
<div class="a" style="left:63px;top:351.00px;width:898px;height:44.00px;background:#fff;"></div>
<div class="a" style="left:970px;top:351.00px;width:931px;height:44.00px;background:#fff;"></div>
<div class="a" style="left:63px;top:394.00px;width:898px;height:1.00px;background:#e9ebee;"></div>
<div class="a" style="left:970px;top:394.00px;width:931px;height:1.00px;background:#e9ebee;"></div>
<div class="a" style="left:97px;top:351.00px;width:1px;height:44.00px;background:#e9ebee;"></div>
<div class="a" style="left:347px;top:351.00px;width:1px;height:44.00px;background:#e9ebee;"></div>
<div class="a" style="left:447px;top:351.00px;width:1px;height:44.00px;background:#e9ebee;"></div>
<div class="a" style="left:597px;top:351.00px;width:1px;height:44.00px;background:#e9ebee;"></div>
<div class="a" style="left:647px;top:351.00px;width:1px;height:44.00px;background:#e9ebee;"></div>
<div class="a" style="left:790px;top:351.00px;width:1px;height:44.00px;background:#e9ebee;"></div>
<div class="a" style="left:1155px;top:351.00px;width:1px;height:44.00px;background:#e9ebee;"></div>
<div class="a" style="left:1305px;top:351.00px;width:1px;height:44.00px;background:#e9ebee;"></div>
<div class="a" style="left:1455px;top:351.00px;width:1px;height:44.00px;background:#e9ebee;"></div>
<div class="a" style="left:1605px;top:351.00px;width:1px;height:44.00px;background:#e9ebee;"></div>
<div class="a" style="left:1755px;top:351.00px;width:1px;height:44.00px;background:#e9ebee;"></div>
<div class="t" style="left:132px;top:364.65px;font-size:17px;line-height:17px;color:#1f2329;">Cyber consultant - ALB Se...</div>
<div class="t" style="left:607.5px;top:364.65px;font-size:17px;line-height:17px;color:#1f2329;">N...</div>
<div class="t" style="right:970.4px;top:364.65px;font-size:17px;line-height:17px;color:#1f2329;">30.00d</div>
<div class="t" style="left:979px;top:364.65px;font-size:17px;line-height:17px;color:#1f2329;">Commitment Effort</div>
<div class="t" style="right:325.5px;top:364.65px;font-size:17px;line-height:17px;color:#1f2329;">20.00d</div>
<div class="t" style="right:175.5px;top:364.65px;font-size:17px;line-height:17px;color:#1f2329;">10.00d</div>
<div class="a" style="left:63px;top:395.00px;width:898px;height:43.00px;background:#fff;"></div>
<div class="a" style="left:970px;top:395.00px;width:931px;height:43.00px;background:#fff;"></div>
<div class="a" style="left:63px;top:437.00px;width:898px;height:1.00px;background:#e9ebee;"></div>
<div class="a" style="left:970px;top:437.00px;width:931px;height:1.00px;background:#e9ebee;"></div>
<div class="a" style="left:97px;top:395.00px;width:1px;height:43.00px;background:#e9ebee;"></div>
<div class="a" style="left:347px;top:395.00px;width:1px;height:43.00px;background:#e9ebee;"></div>
<div class="a" style="left:447px;top:395.00px;width:1px;height:43.00px;background:#e9ebee;"></div>
<div class="a" style="left:597px;top:395.00px;width:1px;height:43.00px;background:#e9ebee;"></div>
<div class="a" style="left:647px;top:395.00px;width:1px;height:43.00px;background:#e9ebee;"></div>
<div class="a" style="left:790px;top:395.00px;width:1px;height:43.00px;background:#e9ebee;"></div>
<div class="a" style="left:1155px;top:395.00px;width:1px;height:43.00px;background:#e9ebee;"></div>
<div class="a" style="left:1305px;top:395.00px;width:1px;height:43.00px;background:#e9ebee;"></div>
<div class="a" style="left:1455px;top:395.00px;width:1px;height:43.00px;background:#e9ebee;"></div>
<div class="a" style="left:1605px;top:395.00px;width:1px;height:43.00px;background:#e9ebee;"></div>
<div class="a" style="left:1755px;top:395.00px;width:1px;height:43.00px;background:#e9ebee;"></div>
<div class="a" style="left:1306px;top:395.00px;width:149px;height:42.00px;background:#c3dcfb;"></div>
<div class="a" style="left:1456px;top:395.00px;width:149px;height:42.00px;background:#c5eefb;"></div>
<div class="a" style="left:1606px;top:395.00px;width:149px;height:42.00px;background:#bde9b5;"></div>
<div class="a" style="left:1756px;top:395.00px;width:145px;height:42.00px;background:#fdcfb3;"></div>
<svg class="a" style="left:71.7px;top:408.00px" width="16" height="16" viewBox="0 0 16 16"><rect x="1.5" y="1.5" width="13" height="13" rx="1.5" fill="#fff" stroke="#4f5660" stroke-width="1.9"/></svg>
<svg class="a" style="left:117px;top:412.50px" width="12" height="9" viewBox="0 0 12 9"><path d="M0 0.3 H12 L6 8.3 Z" fill="#6b6f75"/></svg>
<div class="t" style="left:135px;top:408.48px;font-size:17px;line-height:17px;color:#1f2329;">Cyber consultant - ALB S...</div>
<div class="t" style="left:358px;top:408.48px;font-size:17px;line-height:17px;color:#1f2329;">To be co...</div>
<div class="t" style="left:607.5px;top:408.48px;font-size:17px;line-height:17px;color:#1f2329;">N...</div>
<div class="t" style="right:1140px;top:408.48px;font-size:17px;line-height:17px;color:#1f2329;">60.00d</div>
<div class="t" style="right:970.4px;top:408.48px;font-size:17px;line-height:17px;color:#1f2329;">53.00d</div>
<div class="t" style="left:979px;top:408.48px;font-size:17px;line-height:17px;color:#1f2329;">Request Effort</div>
<div class="t" style="right:475.5px;top:408.48px;font-size:17px;line-height:17px;color:#1c3480;">20.00d</div>
<div class="t" style="right:325.5px;top:408.48px;font-size:17px;line-height:17px;color:#1d5570;">10.00d</div>
<div class="t" style="right:175.5px;top:408.48px;font-size:17px;line-height:17px;color:#1f6b1f;">10.00d</div>
<div class="t" style="right:25.5px;top:408.48px;font-size:17px;line-height:17px;color:#7a3b14;">10.00d</div>
<div class="a" style="left:63px;top:438.00px;width:898px;height:44.00px;background:#fff;"></div>
<div class="a" style="left:970px;top:438.00px;width:931px;height:44.00px;background:#fff;"></div>
<div class="a" style="left:63px;top:481.00px;width:898px;height:1.00px;background:#e9ebee;"></div>
<div class="a" style="left:970px;top:481.00px;width:931px;height:1.00px;background:#e9ebee;"></div>
<div class="a" style="left:97px;top:438.00px;width:1px;height:44.00px;background:#e9ebee;"></div>
<div class="a" style="left:347px;top:438.00px;width:1px;height:44.00px;background:#e9ebee;"></div>
<div class="a" style="left:447px;top:438.00px;width:1px;height:44.00px;background:#e9ebee;"></div>
<div class="a" style="left:597px;top:438.00px;width:1px;height:44.00px;background:#e9ebee;"></div>
<div class="a" style="left:647px;top:438.00px;width:1px;height:44.00px;background:#e9ebee;"></div>
<div class="a" style="left:790px;top:438.00px;width:1px;height:44.00px;background:#e9ebee;"></div>
<div class="a" style="left:1155px;top:438.00px;width:1px;height:44.00px;background:#e9ebee;"></div>
<div class="a" style="left:1305px;top:438.00px;width:1px;height:44.00px;background:#e9ebee;"></div>
<div class="a" style="left:1455px;top:438.00px;width:1px;height:44.00px;background:#e9ebee;"></div>
<div class="a" style="left:1605px;top:438.00px;width:1px;height:44.00px;background:#e9ebee;"></div>
<div class="a" style="left:1755px;top:438.00px;width:1px;height:44.00px;background:#e9ebee;"></div>
<div class="t" style="left:132px;top:452.31px;font-size:17px;line-height:17px;color:#1f2329;">Goy, Greta</div>
<div class="t" style="left:607.5px;top:452.31px;font-size:17px;line-height:17px;color:#1f2329;">N...</div>
<div class="t" style="right:970.4px;top:452.31px;font-size:17px;line-height:17px;color:#1f2329;">53.00d</div>
<div class="t" style="left:979px;top:452.31px;font-size:17px;line-height:17px;color:#1f2329;">Commitment Effort</div>
<div class="t" style="right:475.5px;top:452.31px;font-size:17px;line-height:17px;color:#1f2329;">2.00d</div>
<div class="t" style="right:325.5px;top:452.31px;font-size:17px;line-height:17px;color:#1f2329;">8.00d</div>
<div class="t" style="right:175.5px;top:452.31px;font-size:17px;line-height:17px;color:#1f2329;">10.00d</div>
<div class="t" style="right:25.5px;top:452.31px;font-size:17px;line-height:17px;color:#1f2329;">13.00d</div>
</div>
<div class="a" style="left:63px;top:849.5px;width:898px;height:19.5px;background:#fafafa;"></div>
<div class="a" style="left:970px;top:849.5px;width:185px;height:19.5px;background:#fff;"></div>
<div class="a" style="left:1155.5px;top:849.5px;width:745.5px;height:19.5px;background:#fafafa;"></div>
<div class="a" style="left:1901px;top:849.5px;width:19px;height:19.5px;background:#fff;"></div>
<svg class="a" style="left:68px;top:853px;" width="11" height="13" viewBox="0 0 11 13"><path d="M10 0.5 V12.5 L1 6.5 Z" fill="#8a8a8a"/></svg>
<svg class="a" style="left:946px;top:853px;" width="11" height="13" viewBox="0 0 11 13"><path d="M1 0.5 V12.5 L10 6.5 Z" fill="#8a8a8a"/></svg>
<svg class="a" style="left:1161px;top:853px;" width="11" height="13" viewBox="0 0 11 13"><path d="M10 0.5 V12.5 L1 6.5 Z" fill="#8a8a8a"/></svg>
<div class="a" style="left:1178px;top:854px;width:580px;height:11px;background:#8a8a8a;border-radius:6px;"></div>
<div class="a" style="left:1901px;top:383px;width:19px;height:466.5px;background:#fff;"></div>
<svg class="a" style="left:1903px;top:388px;" width="15" height="12" viewBox="0 0 15 12"><path d="M1.5 10.5 H13.5 L7.5 2 Z" fill="#8a8a8a"/></svg>
<div class="a" style="left:1905px;top:406px;width:11px;height:407px;background:#8a8a8a;border-radius:6px;"></div>
<div class="a" style="left:1879px;top:826px;width:68px;height:68px;border-radius:50%;background:#0b6bcb;box-shadow:0 0 4px rgba(0,0,0,0.35);"></div>
<svg class="a" style="left:1896px;top:843px;" width="18" height="17" viewBox="0 0 18 17"><rect x="1.5" y="7" width="3" height="9" fill="#fff"/><rect x="8" y="1.7" width="3" height="14.3" fill="#fff"/><rect x="14.5" y="9.8" width="3" height="6.2" fill="#fff"/></svg>
<div class="a" style="left:934.5px;top:230.5px;width:52px;height:52px;border-radius:50%;background:linear-gradient(#e6393f,#dd3036);border:2px solid #f51616;box-shadow:0 3px 5px rgba(0,0,0,0.28);"></div>
<div class="t" style="left:940.5px;width:40px;text-align:center;top:238.7px;font-size:30px;line-height:30px;color:#f9e6e6;">1</div>
<div class="a" style="left:524.5px;top:676.5px;width:52px;height:52px;border-radius:50%;background:linear-gradient(#e6393f,#dd3036);border:2px solid #f51616;box-shadow:0 3px 5px rgba(0,0,0,0.28);"></div>
<div class="t" style="left:530.5px;width:40px;text-align:center;top:684.7px;font-size:30px;line-height:30px;color:#f9e6e6;">2</div>
<div class="a" style="left:1506.5px;top:564.5px;width:52px;height:52px;border-radius:50%;background:linear-gradient(#e6393f,#dd3036);border:2px solid #f51616;box-shadow:0 3px 5px rgba(0,0,0,0.28);"></div>
<div class="t" style="left:1512.5px;width:40px;text-align:center;top:572.7px;font-size:30px;line-height:30px;color:#f9e6e6;">3</div>
</body></html>
